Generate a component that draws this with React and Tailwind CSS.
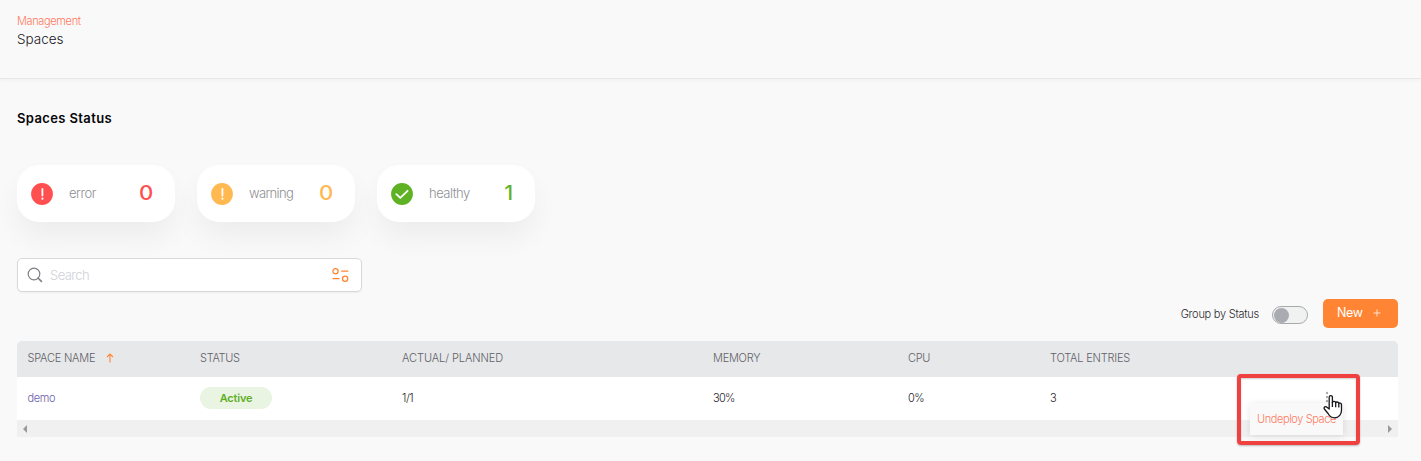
import React from "react";

function AlertIcon({ color }) {
  return (
    <svg width="22" height="22" viewBox="0 0 22 22" className="shrink-0">
      <circle cx="11" cy="11" r="10.9" fill={color} />
      <path d="M11.4 6v6.5" stroke="#fff" strokeWidth="1.8" strokeLinecap="round" />
      <circle cx="11.4" cy="15.7" r="1.1" fill="#fff" />
    </svg>
  );
}

function CheckIcon() {
  return (
    <svg width="22" height="22" viewBox="0 0 22 22" className="shrink-0">
      <circle cx="11" cy="11" r="10.9" fill="#5fb224" />
      <path d="M5.3 11.1l4 3.7 7.3-7" fill="none" stroke="#fff" strokeWidth="1.8" strokeLinecap="round" strokeLinejoin="round" />
    </svg>
  );
}

function StatusCard({ icon, label, labelClass, value, valueClass }) {
  return (
    <div className="flex h-[57px] w-[158px] items-center rounded-[22px] bg-white pr-[22px] pl-[14px] shadow-[0_16px_30px_-2px_rgba(0,0,0,0.055)]">
      {icon}
      <span className={`ml-4 text-[13px] font-light text-[#8e8f94] ${labelClass}`}>{label}</span>
      <span className={`ml-auto pb-px text-[20.5px] leading-[26px] font-medium ${valueClass}`}>{value}</span>
    </div>
  );
}

const columns = "grid grid-cols-[172.5px_202px_311px_195px_142px_1fr] items-center pl-[10.5px]";

export default function App() {
  return (
    <div className="h-[461px] w-full overflow-hidden bg-[#f9f9f9] font-['Inter','Liberation_Sans',sans-serif] whitespace-nowrap">
      <header className="h-[79px] border-b border-[#e7e7e8] pt-[13px] pl-[17px] shadow-[0_2px_4px_rgba(0,0,0,0.03)]">
        <div className="text-[11px] leading-4 font-light tracking-[-0.35px] text-[#ff7960]">Management</div>
        <div className="mt-px text-[13.5px] leading-[18px] font-light tracking-[0px] text-[#17171e]">Spaces</div>
      </header>

      <main className="pr-[23px] pl-[17px]">
        <h1 className="pt-[29px] text-[13px] leading-5 font-semibold tracking-[0.38px] text-[#050508]">Spaces Status</h1>

        <section className="mt-[37px] flex gap-[22px]">
          <StatusCard icon={<AlertIcon color="#ff4f50" />} label="error" labelClass="tracking-[-0.45px]" value="0" valueClass="origin-right scale-x-[1.08] text-[#ff4f50]" />
          <StatusCard icon={<AlertIcon color="#ffb950" />} label="warning" labelClass="tracking-[-0.65px]" value="0" valueClass="origin-right scale-x-[1.08] text-[#ffb950]" />
          <StatusCard icon={<CheckIcon />} label="healthy" labelClass="tracking-[-0.5px]" value="1" valueClass="text-[#5fb224]" />
        </section>

        <div className="mt-9 flex h-[34px] w-[345px] items-center rounded-[5px] border border-[#d9d9dc] bg-white pr-3 pl-[9px] shadow-[0_1px_2px_rgba(0,0,0,0.05)]">
          <svg width="16" height="16" viewBox="0 0 16 16" fill="none" stroke="#7e7f86" strokeWidth="1.2" strokeLinecap="round">
            <circle cx="7" cy="7" r="5.8" />
            <path d="M11 11l3.4 3.4" strokeWidth="1.6" />
          </svg>
          <span className="ml-[7px] pt-[2px] text-[13px] font-light tracking-[-0.55px] text-[#d0d1d6]">Search</span>
          <svg className="ml-auto" width="17" height="16" viewBox="0 0 17 16" fill="none" stroke="#ff8533" strokeWidth="1.3" strokeLinecap="round">
            <circle cx="3.5" cy="4.2" r="2.6" />
            <path d="M9.8 4.2h6M1 11.7h6" />
            <circle cx="13.1" cy="11.7" r="2.6" />
          </svg>
        </div>

        <div className="mt-[7px] flex h-[29px] items-center justify-end">
          <span className="pt-[2px] text-[11px] font-light tracking-[-0.25px] text-[#29292f]">Group by Status</span>
          <span className="mt-[3px] ml-[13px] flex h-[18px] w-9 items-center rounded-full border border-[#a8a9ad] bg-[#f0f2f2] pl-px">
            <span className="size-[15px] rounded-full bg-[#aaabb0]" />
          </span>
          <button className="ml-[15px] flex h-[29px] w-[75px] items-center rounded-[5px] bg-[#ff8534] pb-px pl-[14px] text-[12.5px] tracking-[-0.4px] text-white">
            New
            <svg className="ml-[10px]" width="8" height="8" viewBox="0 0 8 8" stroke="#ffe0cb" strokeWidth="1">
              <path d="M4 .5v7M.5 4h7" />
            </svg>
          </button>
        </div>

        <section className="relative mt-[13px] h-24 w-full">
          <div className={`${columns} h-9 rounded-t-[5px] bg-[#e7e8ea] pb-[2px] text-[11px] font-light text-[#606066]`}>
            <span className="flex items-center tracking-[-0.22px]">
              SPACE NAME
              <svg className="ml-[11px]" width="8" height="10" viewBox="0 0 8 10" fill="none" stroke="#ff8533" strokeWidth="1.1">
                <path d="M4 9.5V1M1 4l3-3 3 3" />
              </svg>
            </span>
            <span className="tracking-[-0.3px]">STATUS</span>
            <span className="tracking-[-0.07px]">ACTUAL/ PLANNED</span>
            <span className="tracking-[-0.25px]">MEMORY</span>
            <span className="tracking-[-0.3px]">CPU</span>
            <span className="tracking-[-0.2px]">TOTAL ENTRIES</span>
          </div>
          <div className={`${columns} h-[43px] bg-white pb-px text-[11px] font-light tracking-[-0.4px] text-[#222229]`}>
            <a className="text-[#6c60a8]">demo</a>
            <span className="flex h-[22px] w-[72px] items-center justify-center rounded-full bg-[#e9f4e3] font-semibold tracking-[-0.2px] text-[#5fae27]">Active</span>
            <span>1/1</span>
            <span className="tracking-[-0.7px]">30%</span>
            <span className="tracking-[-0.6px]">0%</span>
            <span className="flex items-center justify-between">
              3
              <svg className="mr-[69px] mb-[3px]" width="4" height="12" viewBox="0 0 4 12" fill="#aaaaae">
                <circle cx="2" cy="2" r="1.2" />
                <circle cx="2" cy="6" r="1.2" />
                <circle cx="2" cy="10" r="1.2" />
              </svg>
            </span>
          </div>
          <div className="flex h-[17px] items-center justify-between bg-[#f0f0f0] px-[6px]">
            <svg width="4" height="8" viewBox="0 0 4 8" fill="#999"><path d="M4 0v8L0 4z" /></svg>
            <svg width="4" height="8" viewBox="0 0 4 8" fill="#999"><path d="M0 0v8l4-4z" /></svg>
          </div>

          <div className="absolute top-[62px] right-[55px] flex h-8 w-[93px] items-center bg-[#f9f9f9] pl-[7px] text-[11px] font-light tracking-[-0.4px] text-[#ff7960] shadow-[0_1px_7px_rgba(0,0,0,0.1)]">
            Undeploy Space
          </div>
          <div className="absolute top-[33px] right-[38px] h-[71px] w-[123px] rounded-[4px] border-[4px] border-[#f04141] shadow-[0_1px_2px_rgba(0,0,0,0.25),inset_0_1px_2px_rgba(0,0,0,0.2)]" />
          <svg className="absolute top-[53px] right-[55px]" width="20" height="26" viewBox="0 0 20 26" fill="#fff" stroke="#17171d" strokeWidth="1.3" strokeLinejoin="round">
            <path d="M6.2 15V3.2a1.6 1.6 0 0 1 3.2 0v5.4c.2-1.6 3.1-1.5 3.3.3.3-1.4 3-1.2 3.1.7.4-1 2.7-.7 2.7 1.2v5.4c0 3.6-2.2 7.6-7.2 7.6-3.2 0-5-2-6.2-4.3L1.4 15c-1-2 1.3-3.2 2.6-1.8z" />
            <path d="M9.4 8v5M12.7 9v4.3M15.8 10v3.5" fill="none" />
          </svg>
        </section>
      </main>
    </div>
  );
}
